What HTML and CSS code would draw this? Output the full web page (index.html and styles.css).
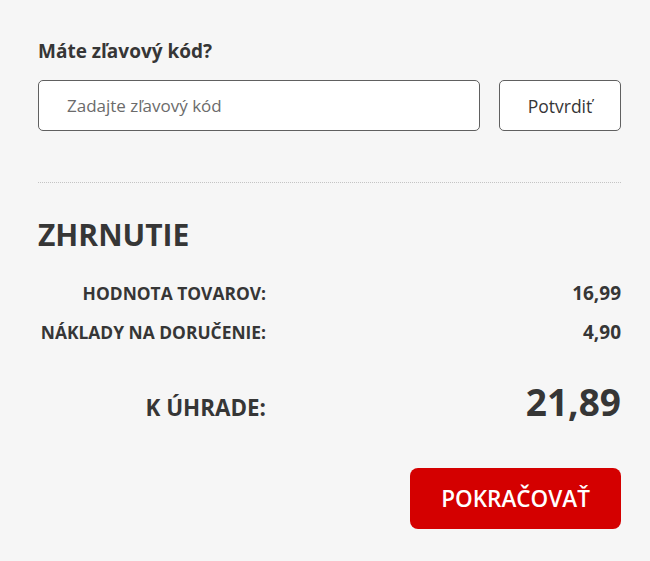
FILE: index.html
```html
<!DOCTYPE html>
<html lang="sk">
<head>
<meta charset="utf-8">
<link rel="stylesheet" href="styles.css">
</head>
<body>
<div class="page">
  <section class="coupon">
    <h3 class="coupon-title">Máte zľavový kód?</h3>
    <div class="coupon-row">
      <input class="coupon-input" type="text" placeholder="Zadajte zľavový kód">
      <button class="coupon-btn">Potvrdiť</button>
    </div>
  </section>
  <hr class="divider">
  <section class="summary">
    <h2 class="summary-title">ZHRNUTIE</h2>
    <div class="rows">
      <div class="label">HODNOTA TOVAROV:</div><div class="value">16,99</div>
      <div class="label">NÁKLADY NA DORUČENIE:</div><div class="value">4,90</div>
    </div>
    <div class="total">
      <div class="total-label">K ÚHRADE:</div><div class="total-value">21,89</div>
    </div>
    <div class="actions">
      <button class="continue">POKRAČOVAŤ</button>
    </div>
  </section>
</div>
</body>
</html>
```

FILE: styles.css
```css
html, body {
  margin: 0;
  padding: 0;
  background: #f6f6f6;
}
body {
  font-family: "Open Sans", "Liberation Sans", sans-serif;
  color: #363636;
}
.page {
  padding: 38px 29px 0 38px;
}
.coupon-title {
  margin: 0 0 16px;
  font-size: 19px;
  font-weight: 700;
  line-height: 26px;
}
.coupon-row {
  display: flex;
  gap: 19px;
}
.coupon-input {
  flex: 1;
  height: 51px;
  box-sizing: border-box;
  border: 1px solid #606060;
  border-radius: 5px;
  background: #fff;
  padding: 0 28px;
  font-family: inherit;
  font-size: 17px;
  color: #333;
  outline: none;
}
.coupon-input::placeholder {
  color: #6b6b6b;
}
.coupon-btn {
  width: 122px;
  height: 51px;
  box-sizing: border-box;
  border: 1px solid #606060;
  border-radius: 5px;
  background: #fff;
  font-family: inherit;
  font-size: 17.5px;
  color: #363636;
  padding: 0;
}
.divider {
  margin: 51px 0 0;
  border: 0;
  border-top: 1px dotted #c4c4c4;
  height: 0;
}
.summary-title {
  margin: 32px 0 0;
  font-size: 30px;
  font-weight: 700;
  line-height: 40px;
}
.rows {
  display: grid;
  grid-template-columns: 228px 1fr;
  align-items: baseline;
  row-gap: 13px;
  margin-top: 25px;
  font-weight: 700;
  line-height: 26px;
}
.label {
  text-align: right;
  font-size: 17.4px;
}
.value {
  text-align: right;
  font-size: 19px;
}
.total {
  display: grid;
  grid-template-columns: 228px 1fr;
  align-items: baseline;
  margin-top: 34px;
  font-weight: 700;
}
.total-label {
  text-align: right;
  font-size: 22.4px;
  line-height: 30px;
}
.total-value {
  text-align: right;
  font-size: 37px;
  line-height: 46px;
}
.actions {
  display: flex;
  justify-content: flex-end;
  margin-top: 43px;
}
.continue {
  width: 211px;
  height: 61px;
  border: 0;
  border-radius: 8px;
  background: #d40000;
  color: #fff;
  font-family: inherit;
  font-size: 22.5px;
  font-weight: 600;
  padding: 0;
}
```
